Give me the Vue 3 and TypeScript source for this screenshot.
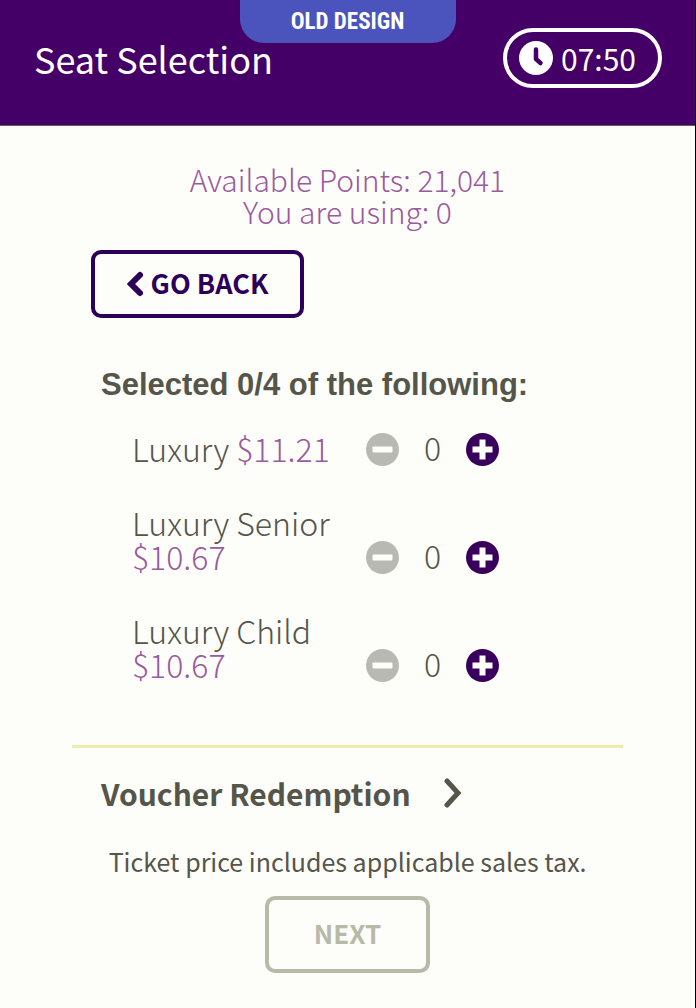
<script setup lang="ts">
import { computed, ref } from 'vue'

interface Ticket {
  id: string
  name: string
  price: string
  count: number
}

const maxSeats = 4
const tickets = ref<Ticket[]>([
  { id: 'luxury', name: 'Luxury', price: '$11.21', count: 0 },
  { id: 'senior', name: 'Luxury Senior', price: '$10.67', count: 0 },
  { id: 'child', name: 'Luxury Child', price: '$10.67', count: 0 },
])
const selected = computed(() => tickets.value.reduce((sum, t) => sum + t.count, 0))
</script>

<template>
  <div class="page">
    <header class="header">
      <span class="badge">OLD DESIGN</span>
      <h1 class="title">Seat Selection</h1>
      <div class="timer">
        <svg class="clock" viewBox="0 0 34 34" aria-hidden="true">
          <circle cx="17" cy="17" r="17" fill="#fff" />
          <path d="M17 8.500V18l4.500 4" fill="none" stroke="#440066" stroke-width="4.500" stroke-linecap="round" stroke-linejoin="round" />
        </svg>
        <span>07:50</span>
      </div>
    </header>

    <main class="content">
      <p class="points">Available Points: 21,041<br />You are using: 0</p>

      <button class="back" type="button">
        <svg class="back-icon" viewBox="0 0 16 26" aria-hidden="true">
          <path d="M13 4L4 13l9 9" fill="none" stroke="currentColor" stroke-width="6" stroke-linecap="round" stroke-linejoin="miter" />
        </svg>
        <span class="button-text">GO BACK</span>
      </button>

      <h2 class="selected">Selected {{ selected }}/{{ maxSeats }} of the following:</h2>

      <ul class="tickets">
        <li v-for="t in tickets" :key="t.id" class="ticket">
          <div class="ticket-name">{{ t.name }} <span class="price">{{ t.price }}</span></div>
          <div class="stepper">
            <button class="step" type="button" :disabled="t.count === 0" :aria-label="`Remove ${t.name}`" @click="t.count--">
              <svg viewBox="0 0 33 33" aria-hidden="true">
                <circle cx="16.500" cy="16.500" r="16.500" fill="currentColor" />
                <rect x="6.500" y="13.500" width="20" height="6" rx="1" fill="#fdfdfa" />
              </svg>
            </button>
            <output class="count">{{ t.count }}</output>
            <button class="step" type="button" :disabled="selected >= maxSeats" :aria-label="`Add ${t.name}`" @click="t.count++">
              <svg viewBox="0 0 33 33" aria-hidden="true">
                <circle cx="16.500" cy="16.500" r="16.500" fill="currentColor" />
                <path d="M6.500 13.500h7v-7h6v7h7v6h-7v7h-6v-7h-7z" fill="#fdfdfa" />
              </svg>
            </button>
          </div>
        </li>
      </ul>

      <hr class="divider" />

      <button class="voucher" type="button">
        <span>Voucher Redemption</span>
        <svg class="voucher-icon" viewBox="0 0 18 30" aria-hidden="true">
          <path d="M3 3l11 12L3 27" fill="none" stroke="currentColor" stroke-width="5" stroke-linecap="round" stroke-linejoin="miter" />
        </svg>
      </button>

      <p class="tax">Ticket price includes applicable sales tax.</p>
      <button class="next" type="button" :disabled="selected === 0">
        <span class="button-text">NEXT</span>
      </button>
    </main>
  </div>
</template>

<style>
body {
  margin: 0;
  background: #fdfdfa;
}
</style>

<style scoped>
.page {
  box-sizing: border-box;
  min-height: 100vh;
  border-right: 1px solid #000;
  font-family: "Noto Sans CJK SC", "Noto Sans", sans-serif;
  font-size: 30px;
  font-weight: 300;
  line-height: 34px;
  color: #55554a;
}
button {
  font-family: inherit;
  cursor: pointer;
}
button:disabled {
  cursor: default;
}
.header {
  position: relative;
  display: flex;
  align-items: center;
  justify-content: space-between;
  box-sizing: border-box;
  height: 126px;
  padding: 0 33px 10px 34px;
  color: #fff;
  background: #440066;
  border-bottom: 1px solid #6b5a5a;
}
.badge {
  position: absolute;
  top: 0;
  left: 50%;
  transform: translateX(-50%);
  box-sizing: border-box;
  width: 216px;
  height: 43px;
  border-radius: 0 0 24px 24px;
  background: #4a54bc;
  font-family: "Roboto Condensed", "Noto Sans CJK SC", sans-serif;
  font-size: 23px;
  font-weight: 700;
  line-height: 43px;
  text-align: center;
  white-space: nowrap;
}
.title {
  margin: 0;
  font-size: 36px;
  font-weight: 400;
  line-height: 40px;
}
.timer {
  display: flex;
  align-items: center;
  gap: 8px;
  box-sizing: border-box;
  height: 60px;
  padding: 0 22px 0 12px;
  border: 4px solid #fff;
  border-radius: 30px;
  font-weight: 400;
}
.clock {
  width: 34px;
  height: 34px;
}
.content {
  display: flex;
  flex-direction: column;
  padding: 37px 72px 36px;
}
.points {
  margin: 0;
  line-height: 32px;
  text-align: center;
  color: #9a5a9e;
}
.back {
  display: flex;
  align-items: center;
  justify-content: center;
  align-self: flex-start;
  gap: 8px;
  box-sizing: border-box;
  width: 213px;
  height: 68px;
  margin: 23px 0 0 19px;
  padding: 0;
  border: 4px solid #2c0058;
  border-radius: 10px;
  background: transparent;
  color: #2c0058;
  font-size: 27px;
  font-weight: 700;
}
.back-icon {
  width: 16px;
  height: 26px;
}
.button-text {
  padding-bottom: 4px;
}
.selected {
  margin: 50px 0 0 29px;
  font-family: "Liberation Sans", Arial, sans-serif;
  font-size: 31px;
  font-weight: 700;
  line-height: 34px;
}
.tickets {
  display: flex;
  flex-direction: column;
  gap: 40px;
  margin: 29px 0 0;
  padding: 0 0 0 60px;
  list-style: none;
  font-size: 32px;
}
.ticket {
  display: flex;
  align-items: flex-end;
}
.ticket-name {
  width: 214px;
  margin-right: 20px;
}
.price {
  color: #9a5a9e;
}
.stepper {
  display: flex;
  align-items: center;
  gap: 24px;
  height: 32px;
}
.step {
  display: flex;
  padding: 0;
  border: 0;
  background: none;
  color: #38005c;
}
.step:disabled {
  color: #b9b9b4;
}
.step svg {
  width: 33px;
  height: 33px;
}
.count {
  width: 19px;
  padding-bottom: 4px;
  line-height: 32px;
  text-align: center;
}
.divider {
  width: 100%;
  height: 3px;
  margin: 64px 0 0;
  border: 0;
  background: #ededaa;
}
.voucher {
  display: flex;
  align-items: center;
  align-self: flex-start;
  gap: 33px;
  margin: 28px 0 0 29px;
  padding: 0;
  border: 0;
  background: none;
  color: #55554a;
  font-size: 30px;
  font-weight: 700;
  line-height: 34px;
}
.voucher-icon {
  width: 18px;
  height: 30px;
}
.tax {
  margin: 34px 0 0;
  font-size: 25px;
  font-weight: 400;
  text-align: center;
}
.next {
  display: flex;
  align-items: center;
  justify-content: center;
  align-self: center;
  box-sizing: border-box;
  width: 165px;
  height: 77px;
  margin-top: 18px;
  padding: 0;
  border: 4px solid #b9b9a8;
  border-radius: 10px;
  background: transparent;
  color: #b9b9a8;
  font-size: 26px;
  font-weight: 700;
}
</style>
